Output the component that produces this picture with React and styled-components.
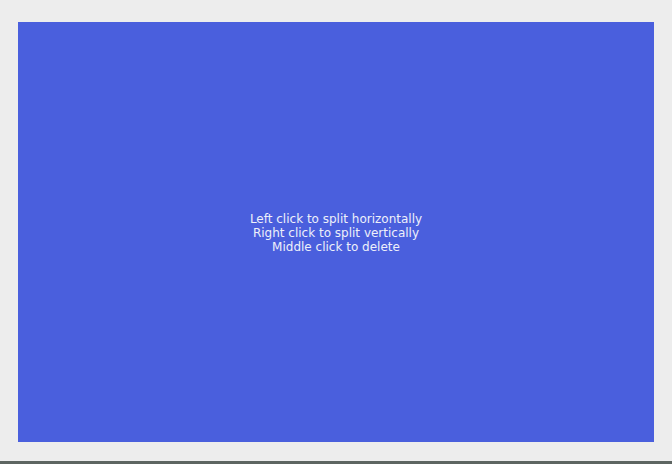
import React from "react";
import styled, { createGlobalStyle } from "styled-components";

const GlobalStyle = createGlobalStyle`
    html, body {
        margin: 0;
        padding: 0;
        background: #ededed;
    }
    #root {
        height: 464px;
    }
`;

//分割パネルのデモ画面
export const App = () => {
    const [panes, setPanes] = React.useState(1);
    return (
        <>
            <GlobalStyle />
            <Screen>
                <Workspace>
                    <Pane
                        color="#4a5fdd"
                        onClick={() => setPanes(panes + 1)}
                        onContextMenu={(e) => e.preventDefault()}
                    >
                        <Hint>
                            <span>Left click to split horizontally</span>
                            <span>Right click to split vertically</span>
                            <span>Middle click to delete</span>
                        </Hint>
                    </Pane>
                </Workspace>
                <StatusStrip />
            </Screen>
        </>
    );
}

export default App

const Screen = styled.div`
    display: flex;
    flex-direction: column;
    height: 464px;
    background: #ededed;
`;

const Workspace = styled.div`
    flex: 1;
    display: flex;
    padding: 22px 18px 19px;
`;

const Pane = styled.div`
    flex: 1;
    display: flex;
    align-items: center;
    justify-content: center;
    background: ${(p) => p.color};
    cursor: pointer;
    user-select: none;
`;

const Hint = styled.div`
    display: flex;
    flex-direction: column;
    align-items: center;
    padding-top: 2px;
    font-family: "DejaVu Sans", sans-serif;
    font-size: 12px;
    line-height: 14px;
    color: #eef0fa;
`;

const StatusStrip = styled.div`
    height: 3px;
    background: #5d6561;
`;
